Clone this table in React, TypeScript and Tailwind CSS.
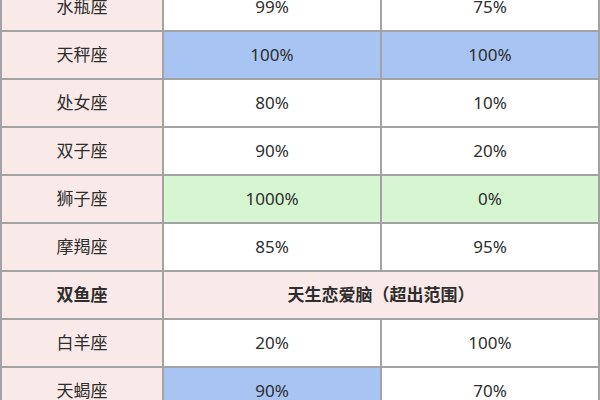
const rows: { sign: string; a: string; b: string; aBg?: string; bBg?: string }[] = [
  { sign: "水瓶座", a: "99%", b: "75%" },
  { sign: "天秤座", a: "100%", b: "100%", aBg: "bg-[#a8c4f2]", bBg: "bg-[#a8c4f2]" },
  { sign: "处女座", a: "80%", b: "10%" },
  { sign: "双子座", a: "90%", b: "20%" },
  { sign: "狮子座", a: "1000%", b: "0%", aBg: "bg-[#d6f6d2]", bBg: "bg-[#d6f6d2]" },
  { sign: "摩羯座", a: "85%", b: "95%" },
];

const rest: { sign: string; a: string; b: string; aBg?: string; bBg?: string }[] = [
  { sign: "白羊座", a: "20%", b: "100%" },
  { sign: "天蝎座", a: "90%", b: "70%", aBg: "bg-[#a8c4f2]" },
];

const cell = "flex items-center justify-center h-[46px]";

const Row = ({ r }: { r: (typeof rows)[number] }) => (
  <>
    <div className={`${cell} bg-[#f9e9e8]`}>{r.sign}</div>
    <div className={`${cell} ${r.aBg ?? "bg-white"}`}>{r.a}</div>
    <div className={`${cell} ${r.bBg ?? "bg-white"}`}>{r.b}</div>
  </>
);

export default function App() {
  return (
    <div
      className="w-[600px] h-[400px] overflow-hidden bg-white text-[#2e2e2e] text-[17px]"
      style={{ fontFamily: '"Noto Sans", "Noto Sans CJK SC", sans-serif' }}
    >
      <div className="-mt-[18px] grid grid-cols-[160px_216px_216px] gap-[2px] p-[2px] bg-[#a3a3a3]">
        {rows.map((r) => (
          <Row key={r.sign} r={r} />
        ))}
        <div className={`${cell} bg-[#f9e9e8] font-semibold`}>双鱼座</div>
        <div className={`${cell} col-span-2 bg-[#f9e9e8] font-semibold`}>
          天生恋爱脑（超出范围）
        </div>
        {rest.map((r) => (
          <Row key={r.sign} r={r} />
        ))}
      </div>
    </div>
  );
}
